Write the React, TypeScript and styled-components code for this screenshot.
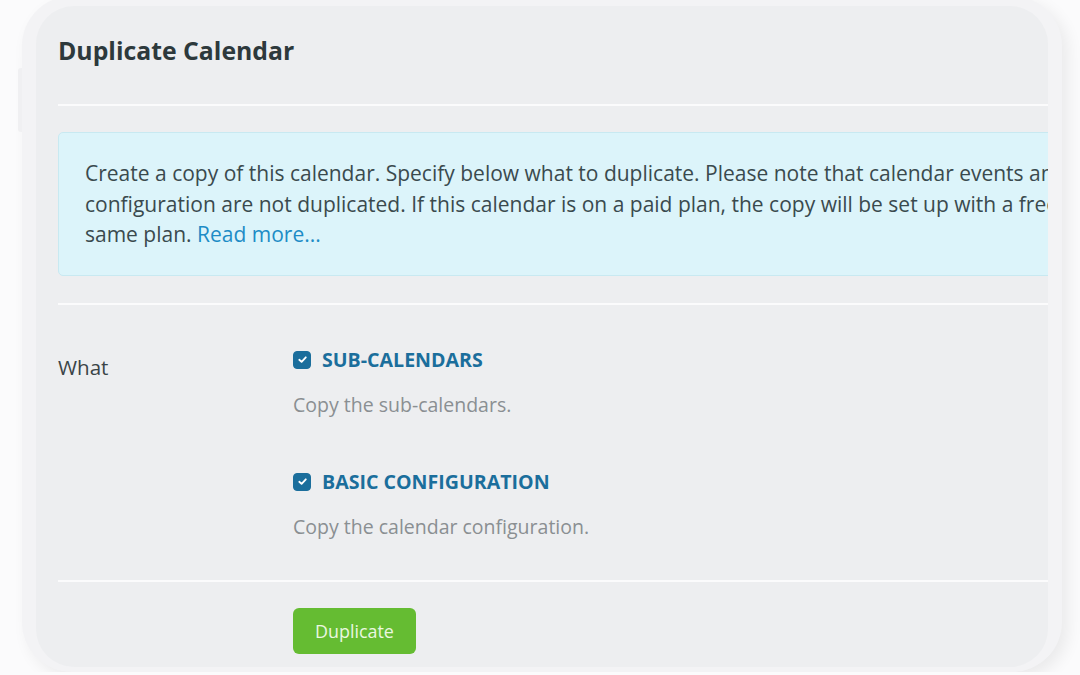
import React, { useState } from "react";
import styled, { createGlobalStyle } from "styled-components";

const GlobalStyle = createGlobalStyle`
  html, body {
    margin: 0;
    padding: 0;
    background: #fbfbfc;
    overflow: hidden;
  }
  body {
    font-family: "Open Sans", "Noto Sans", "Liberation Sans", sans-serif;
  }
`;

interface OptionProps {
  title: string;
  description: string;
  checked: boolean;
  onToggle: () => void;
}

function Option({ title, description, checked, onToggle }: OptionProps) {
  return (
    <OptionBlock>
      <OptionLabel onClick={onToggle}>
        <Check checked={checked}>
          {checked && (
            <svg width="11" height="11" viewBox="0 0 12 12">
              <path
                d="M2.5 6.3 L5 8.6 L9.6 3.6"
                fill="none"
                stroke="#ffffff"
                strokeWidth="2"
                strokeLinecap="round"
                strokeLinejoin="round"
              />
            </svg>
          )}
        </Check>
        {title}
      </OptionLabel>
      <OptionHint>{description}</OptionHint>
    </OptionBlock>
  );
}

export default function App() {
  const [subCalendars, setSubCalendars] = useState(true);
  const [basicConfig, setBasicConfig] = useState(true);

  return (
    <>
      <GlobalStyle />
      <Frame>
        <Panel>
          <Content>
            <Title>Duplicate Calendar</Title>
            <Divider />
            <InfoBox>
              Create a copy of this calendar. Specify below what to duplicate. Please note that
              calendar events and integration
              <br />
              configuration are not duplicated. If this calendar is on a paid plan, the copy will
              be set up with a free trial of the
              <br />
              same plan. <Link href="#">Read more...</Link>
            </InfoBox>
            <Divider />
            <FormRow>
              <FieldLabel>What</FieldLabel>
              <Options>
                <Option
                  title="SUB-CALENDARS"
                  description="Copy the sub-calendars."
                  checked={subCalendars}
                  onToggle={() => setSubCalendars((v) => !v)}
                />
                <Option
                  title="BASIC CONFIGURATION"
                  description="Copy the calendar configuration."
                  checked={basicConfig}
                  onToggle={() => setBasicConfig((v) => !v)}
                />
              </Options>
            </FormRow>
            <Divider />
            <Actions>
              <DuplicateButton>Duplicate</DuplicateButton>
            </Actions>
          </Content>
        </Panel>
      </Frame>
    </>
  );
}

const Frame = styled.div`
  position: relative;
  box-sizing: border-box;
  margin: -4px 0 0 22px;
  width: 1040px;
  height: 676px;
  padding: 10px 14px 5px 14px;
  background: #f3f3f5;
  border-radius: 50px;
  box-shadow: 6px 6px 16px rgba(0, 0, 0, 0.07);

  &::before {
    content: "";
    position: absolute;
    left: -4px;
    top: 72px;
    width: 4px;
    height: 64px;
    border-radius: 3px 0 0 3px;
    background: #f0f0f2;
  }
`;

const Panel = styled.div`
  box-sizing: border-box;
  height: 100%;
  background: #edeef0;
  border-radius: 38px;
  overflow: hidden;
  padding-left: 22px;
`;

const Content = styled.div`
  width: 1400px;
  padding-top: 27px;
`;

const Title = styled.h1`
  margin: 0 0 37px;
  font-size: 24.8px;
  line-height: 34px;
  font-weight: 700;
  color: #2d393c;
`;

const Divider = styled.div`
  height: 2px;
  background: #fbfbfc;
`;

const InfoBox = styled.div`
  box-sizing: border-box;
  margin: 26px 0 27px;
  padding: 25px 26px 25px 26px;
  background: #dcf4fa;
  border: 1px solid #c8e9f1;
  border-radius: 5px;
  font-size: 21px;
  line-height: 30.5px;
  color: #3a4a4e;
  white-space: nowrap;
`;

const Link = styled.a`
  color: #1d8cc6;
  text-decoration: none;
`;

const FormRow = styled.div`
  display: flex;
  padding: 41px 0 39px;
`;

const FieldLabel = styled.div`
  width: 235px;
  flex-shrink: 0;
  padding-top: 7px;
  font-size: 20.6px;
  line-height: 28px;
  color: #3a4447;
`;

const Options = styled.div`
  display: flex;
  flex-direction: column;
  gap: 49px;
`;

const OptionBlock = styled.div`
  display: flex;
  flex-direction: column;
  gap: 17px;
`;

const OptionLabel = styled.label`
  display: flex;
  align-items: center;
  gap: 11px;
  font-size: 19.6px;
  line-height: 28px;
  font-weight: 700;
  color: #1b6e9c;
  cursor: pointer;
`;

const Check = styled.span<{ checked: boolean }>`
  display: inline-flex;
  align-items: center;
  justify-content: center;
  box-sizing: border-box;
  width: 18px;
  height: 18px;
  border-radius: 4px;
  background: ${({ checked }) => (checked ? "#1b6e9c" : "#ffffff")};
  border: 1px solid ${({ checked }) => (checked ? "#1b6e9c" : "#b9c2c6")};
`;

const OptionHint = styled.div`
  font-size: 19.5px;
  line-height: 28px;
  color: #8a8f92;
`;

const Actions = styled.div`
  padding: 26px 0 0 235px;
`;

const DuplicateButton = styled.button`
  height: 46px;
  padding: 0 22px;
  border: none;
  border-radius: 6px;
  background: #65bc32;
  color: #eaf7e0;
  font-family: "Open Sans", "Noto Sans", "Liberation Sans", sans-serif;
  font-size: 17.9px;
  cursor: pointer;
`;
